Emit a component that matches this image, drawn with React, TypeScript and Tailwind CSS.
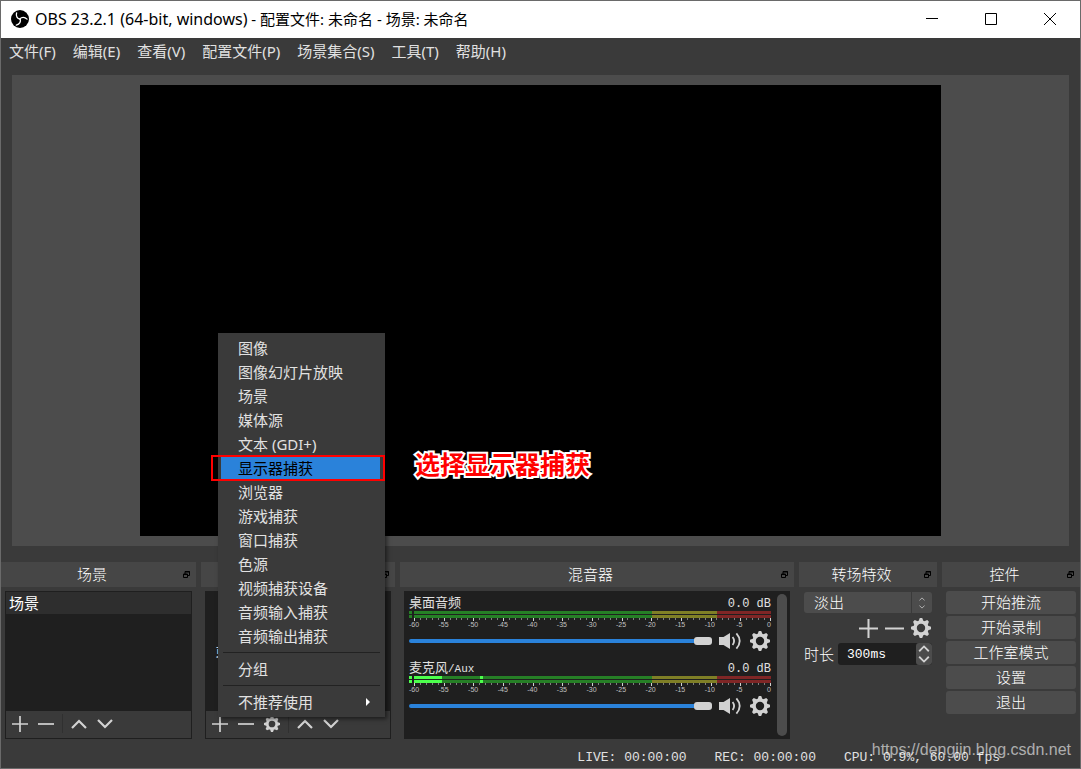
import type { ReactNode } from "react";

const menus = ["文件(F)", "编辑(E)", "查看(V)", "配置文件(P)", "场景集合(S)", "工具(T)", "帮助(H)"];

const sourceTypes = [
  "图像",
  "图像幻灯片放映",
  "场景",
  "媒体源",
  "文本 (GDI+)",
  "显示器捕获",
  "浏览器",
  "游戏捕获",
  "窗口捕获",
  "色源",
  "视频捕获设备",
  "音频输入捕获",
  "音频输出捕获",
];

const controls = ["开始推流", "开始录制", "工作室模式", "设置", "退出"];

const decibels = [-60, -55, -50, -45, -40, -35, -30, -25, -20, -15, -10, -5, 0];

const teeth = [0, 45, 90, 135, 180, 225, 270, 315];

function Logo() {
  return (
    <svg viewBox="0 0 18 18" className="ml-[10px] h-[18px] w-[18px]" aria-hidden="true">
      <circle cx="9" cy="9" r="9" fill="#000" />
      {[0, 120, 240].map((angle) => (
        <path
          key={angle}
          d="M9 9.2C6.4 8.6 4.6 6.4 5.6 2.8"
          fill="none"
          stroke="#fff"
          strokeWidth="1.3"
          strokeLinecap="round"
          transform={`rotate(${angle} 9 9)`}
        />
      ))}
    </svg>
  );
}

function Gear({ className }: { className: string }) {
  return (
    <svg viewBox="0 0 20 20" className={className} aria-hidden="true">
      <circle cx="10" cy="10" r="5.9" fill="none" stroke="#d2d2d2" strokeWidth="3.4" />
      {teeth.map((angle) => (
        <path key={angle} d="M7.4 3.4 L8.8 0 H11.2 L12.6 3.4 Z" fill="#d2d2d2" transform={`rotate(${angle} 10 10)`} />
      ))}
    </svg>
  );
}

function Stroke({ d, className, width = 2 }: { d: string; className: string; width?: number }) {
  return (
    <svg viewBox="0 0 16 16" className={className} fill="none" stroke="#d2d2d2" strokeWidth={width} aria-hidden="true">
      <path d={d} />
    </svg>
  );
}

const PLUS = "M8 0V16M0 8H16";
const MINUS = "M0 8H16";
const UP = "M1 12L8 5L15 12";
const DOWN = "M1 4L8 11L15 4";

function Speaker() {
  return (
    <svg viewBox="0 0 22 18" className="h-[18px] w-[22px]" aria-hidden="true">
      <path d="M0 5H4.5L11 1V17L4.5 13H0Z" fill="#d2d2d2" />
      <path d="M13.6 5Q16.6 9 13.6 13M17.4 1.4Q24 9 17.4 16.6" fill="none" stroke="#d2d2d2" strokeWidth="1.8" />
    </svg>
  );
}

function Dock({ title, children }: { title: string; children: ReactNode }) {
  return (
    <section className="relative flex min-w-0 flex-col">
      <header className="flex h-[25px] items-center bg-[#464646] pr-1.5">
        <h2 className="flex-1 pb-0.5 text-center font-['Noto_Sans_CJK_SC',sans-serif] text-[15px] leading-[23px] font-light text-white">{title}</h2>
        <button type="button" aria-label="浮动" className="h-[7px] w-[7px]">
          <svg viewBox="0 0 7 7" className="block h-[7px] w-[7px]" fill="none" stroke="#000" aria-hidden="true">
            <path d="M2 3V.5H6.5V4.5H5M2 1H7" />
            <path d="M.5 3H4.5V6.5H.5ZM0 3.5H5" />
          </svg>
        </button>
      </header>
      <div className="flex flex-1 flex-col px-1 pt-1">{children}</div>
    </section>
  );
}

function ListPanel({ children, gear }: { children: ReactNode; gear?: boolean }) {
  return (
    <div className="flex h-[148px] flex-col border border-[#1f1f1f]">
      <div className="flex-1 bg-[#1f1f1f]">{children}</div>
      <div className="flex h-[27px] items-center gap-2.5 pb-0.5 pl-1.5">
        <button type="button" aria-label="添加"><Stroke d={PLUS} className="block h-4 w-4" width={1.7} /></button>
        <button type="button" aria-label="移除"><Stroke d={MINUS} className="block h-4 w-4" width={1.7} /></button>
        {gear && <button type="button" aria-label="属性"><Gear className="block h-4 w-4" /></button>}
        <span className="-mx-0.5 h-[19px] w-px bg-[#303030]" />
        <button type="button" aria-label="上移"><Stroke d={UP} className="block h-4 w-4" width={2.2} /></button>
        <button type="button" aria-label="下移"><Stroke d={DOWN} className="block h-4 w-4" width={2.2} /></button>
      </div>
    </div>
  );
}

function SourceMenu() {
  return (
    <div className="absolute bottom-[22px] left-[17px] z-10 w-[167px] bg-[#3a3a3a] p-[3px] font-['Noto_Sans','Noto_Sans_CJK_SC',sans-serif] text-[15px] leading-6 shadow-[2px_2px_4px_rgba(0,0,0,0.5)]">
      <ul>
        {sourceTypes.map((name) =>
          name === "显示器捕获" ? (
            <li key={name} className="relative mr-0.5">
              <button type="button" className="block h-6 w-full bg-[#2a82da] pl-[17px] text-left text-black">
                {name}
              </button>
              <span className="absolute -top-px -right-[5px] -bottom-px -left-2.5 border-2 border-[#ff0000]" />
              <strong className="absolute top-[-16px] left-[194px] text-[25px] leading-[48px] font-bold whitespace-nowrap text-[#ff0000] [paint-order:stroke_fill] [-webkit-text-stroke:4px_white]">
                选择显示器捕获
              </strong>
            </li>
          ) : (
            <li key={name}>
              <button type="button" className="block h-6 w-full pl-[17px] text-left">{name}</button>
            </li>
          ),
        )}
      </ul>
      <hr className="mx-0.5 my-1 border-[#222222]" />
      <button type="button" className="block h-6 w-full pl-[17px] text-left">分组</button>
      <hr className="mx-0.5 my-1 border-[#222222]" />
      <button type="button" className="flex h-6 w-full items-center justify-between pr-3 pl-[17px]">
        不推荐使用
        <svg viewBox="0 0 4 8" className="h-2 w-1" fill="#fff" aria-hidden="true"><path d="M0 0L4 4L0 8Z" /></svg>
      </button>
    </div>
  );
}

function Meter({ active }: { active: boolean }) {
  return (
    <div aria-hidden="true">
      <svg viewBox="0 0 362 10" preserveAspectRatio="none" className="block h-2.5 w-full" shapeRendering="crispEdges">
        {[0, 4].map((y) => (
          <g key={y}>
            <rect x="0" y={y} width="3" height="3" fill={active ? "#4cff4c" : "#267f26"} />
            <rect x="5" y={y} width="238" height="3" fill="#267f26" />
            <rect x="243" y={y} width="65" height="3" fill="#7f7f26" />
            <rect x="308" y={y} width="54" height="3" fill="#7f2626" />
            {active && <rect x="5" y={y} width="28" height="3" fill="#4cff4c" />}
            {active && <rect x="71" y={y} width="3" height="3" fill="#4cff4c" />}
          </g>
        ))}
        {Array.from({ length: 61 }, (_, i) => (
          <rect key={i} x={Math.round(5 + i * 5.93)} y="7" width="1" height={i % 5 === 0 ? 3 : 2} fill={i % 5 === 0 ? "#d2d2d2" : "#808080"} />
        ))}
      </svg>
      <div className="mr-0.5 ml-[5px] flex h-[7px] justify-between text-[7px] leading-[7px]">
        {decibels.map((value) => (
          <span key={value} className="flex w-0 justify-center font-['Liberation_Sans',sans-serif] text-[#c0c0c0]">{value}</span>
        ))}
      </div>
    </div>
  );
}

function Channel({ name, suffix, active = false }: { name: string; suffix?: string; active?: boolean }) {
  return (
    <div className="h-[65px]">
      <div className="flex h-5 items-end justify-between text-[13px] leading-[14px]">
        <span>
          {name}
          {suffix && <span className="text-[11px]">{suffix}</span>}
        </span>
        <span className="text-xs leading-[14px]">0.0 dB</span>
      </div>
      <Meter active={active} />
      <div className="mt-[3px] flex h-5 items-center pr-px">
        <input
          type="range"
          aria-label={name}
          defaultValue={100}
          className="h-2 min-w-0 flex-1 appearance-none bg-transparent [&::-webkit-slider-runnable-track]:h-1 [&::-webkit-slider-runnable-track]:rounded-full [&::-webkit-slider-runnable-track]:bg-[#2a82da] [&::-webkit-slider-thumb]:-mt-0.5 [&::-webkit-slider-thumb]:h-2 [&::-webkit-slider-thumb]:w-[18px] [&::-webkit-slider-thumb]:appearance-none [&::-webkit-slider-thumb]:rounded-[3px] [&::-webkit-slider-thumb]:bg-[#d2d2d2]"
        />
        <button type="button" aria-label="静音" className="ml-[7px]"><Speaker /></button>
        <button type="button" aria-label="音频设置" className="ml-[9px]"><Gear className="block h-5 w-5" /></button>
      </div>
    </div>
  );
}

export default function App() {
  return (
    <div className="flex min-h-screen flex-col border border-[#6a6a6a] bg-[#3a3a3a] font-['Liberation_Mono','Noto_Sans_CJK_SC',monospace] text-[#e1e1e1]">
      <header className="flex h-[37px] items-center bg-white pb-0.5 text-black">
        <Logo />
        <h1 className="ml-1.5 flex-1 font-['Noto_Sans','Noto_Sans_CJK_SC',sans-serif] text-[15px] leading-6">
          <span className="text-base leading-6">OBS 23.2.1 (64-bit, windows)</span> - 配置文件: 未命名 - 场景: 未命名
        </h1>
        <div className="flex items-center gap-[47px] pr-6">
          <button type="button" aria-label="最小化">
            <svg viewBox="0 0 12 12" className="block h-3 w-3" stroke="#000" aria-hidden="true"><path d="M0 5.5H12" /></svg>
          </button>
          <button type="button" aria-label="最大化">
            <svg viewBox="0 0 12 12" className="block h-3 w-3" fill="none" stroke="#000" aria-hidden="true"><path d="M.5 .5H11.5V11.5H.5Z" /></svg>
          </button>
          <button type="button" aria-label="关闭">
            <svg viewBox="0 0 12 12" className="block h-3 w-3" stroke="#000" aria-hidden="true"><path d="M0 0L12 12M12 0L0 12" /></svg>
          </button>
        </div>
      </header>

      <nav className="flex h-7 items-center gap-[17px] px-2 pb-0.5 font-['Noto_Sans','Noto_Sans_CJK_SC',sans-serif] text-[15px] leading-6">
        {menus.map((name) => (
          <button type="button" key={name}>{name}</button>
        ))}
      </nav>

      <main className="mx-[11px] mt-[9px] mb-4 flex min-h-[300px] flex-1 flex-col bg-[#4c4c4c] px-32 py-2.5">
        <div className="w-full flex-1 bg-black" />
      </main>

      <div className="grid grid-cols-[195fr_194fr_394fr_138fr_138fr] gap-[5px]">
        <Dock title="场景">
          <ListPanel>
            <ul className="font-['Noto_Sans','Noto_Sans_CJK_SC',sans-serif] text-[15px]">
              <li className="h-[22px] bg-[#2e2e2e] pl-[3px] leading-[22px] text-white">场景</li>
            </ul>
          </ListPanel>
        </Dock>

        <Dock title="来源">
          <ListPanel gear>
            <p className="flex h-full items-center justify-center font-['Noto_Sans','Noto_Sans_CJK_SC',sans-serif] text-[15px] whitespace-nowrap">
              或者右击此处添加一个。
            </p>
          </ListPanel>
          <SourceMenu />
        </Dock>

        <Dock title="混音器">
          <div className="flex h-[148px] bg-[#1f1f1f] pr-[3px] pl-[5px]">
            <div className="min-w-0 flex-1 pr-1.5">
              <Channel name="桌面音频" />
              <Channel name="麦克风" suffix="/Aux" active />
            </div>
            <div className="my-[3px] w-2.5 rounded-full bg-[#4c4c4c]" />
          </div>
        </Dock>

        <Dock title="转场特效">
          <div className="px-px pt-px font-['Noto_Sans_CJK_SC',sans-serif] text-[15px] font-light text-white">
            <div className="relative">
              <select aria-label="转场特效" className="block h-[21px] w-full appearance-none rounded-[3px] bg-[#4c4c4c] pb-0.5 pl-2.5 leading-[19px]">
                <option>淡出</option>
              </select>
              <span className="pointer-events-none absolute inset-y-0 right-0 flex w-[21px] flex-col items-center justify-center gap-0.5 border-l border-[#3a3a3a]">
                <Stroke d={UP} className="h-1.5 w-1.5" />
                <Stroke d={DOWN} className="h-1.5 w-1.5" />
              </span>
            </div>
            <div className="flex h-[30px] items-center justify-end gap-[7px] pr-px">
              <button type="button" aria-label="添加"><Stroke d={PLUS} className="block h-[19px] w-[19px]" width={1.7} /></button>
              <button type="button" aria-label="移除"><Stroke d={MINUS} className="block h-[19px] w-[19px]" width={1.7} /></button>
              <button type="button" aria-label="属性"><Gear className="block h-5 w-5" /></button>
            </div>
            <div className="flex h-[22px] items-center">
              <label htmlFor="duration" className="leading-[22px]">时长</label>
              <div className="ml-1 flex h-full min-w-0 flex-1 overflow-hidden rounded-[3px] bg-[#1f1f1f]">
                <input id="duration" defaultValue="300ms" className="w-full min-w-0 bg-transparent pt-0.5 pl-[9px] font-['Liberation_Mono',monospace] text-[13px]" />
                <div className="flex w-4 shrink-0 flex-col items-center justify-center rounded-[3px] bg-[#4c4c4c]">
                  <button type="button" aria-label="增加"><Stroke d={UP} className="block h-[11px] w-3" width={2.6} /></button>
                  <button type="button" aria-label="减少"><Stroke d={DOWN} className="block h-[11px] w-3" width={2.6} /></button>
                </div>
              </div>
            </div>
          </div>
        </Dock>

        <Dock title="控件">
          <div className="flex flex-col gap-0.5 font-['Noto_Sans_CJK_SC',sans-serif] text-[15px] font-light text-white">
            {controls.map((name) => (
              <button type="button" key={name} className="h-[23px] rounded-[3px] bg-[#4c4c4c] pb-0.5 leading-[21px]">{name}</button>
            ))}
          </div>
        </Dock>
      </div>

      <footer className="relative mt-1.5 flex h-[23px] items-center justify-end gap-7 pt-0.5 pr-20 text-[13px] whitespace-pre">
        <span>LIVE: 00:00:00</span>
        <span>REC: 00:00:00</span>
        <span>CPU: 0.9%, 60.00 fps</span>
        <a href="https://dengjin.blog.csdn.net" className="absolute -top-[7px] right-[9px] font-['Liberation_Sans',sans-serif] text-base leading-6 text-white/60">
          https://dengjin.blog.csdn.net
        </a>
      </footer>
    </div>
  );
}
